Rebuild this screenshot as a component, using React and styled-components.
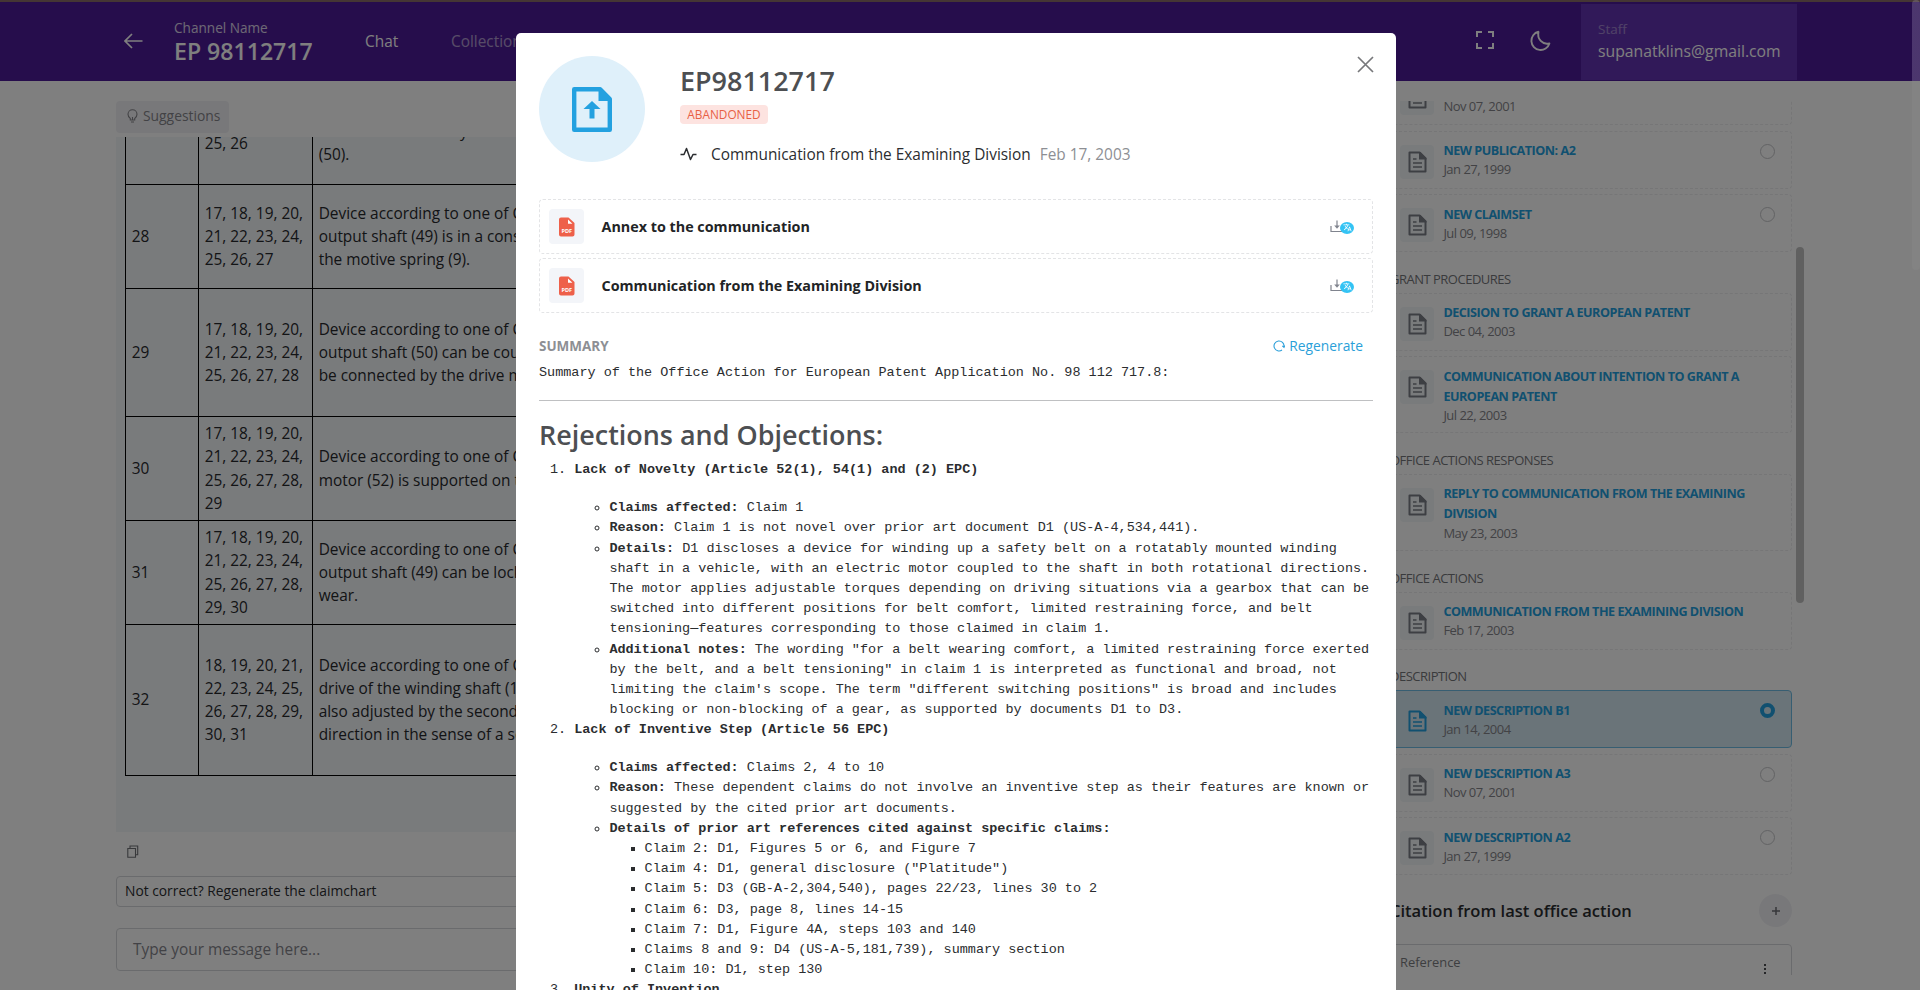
import React from "react";
import styled, { createGlobalStyle } from "styled-components";
import { MdTranslate } from "react-icons/md";

const Global = createGlobalStyle`
  * { box-sizing: border-box; }
  body { margin: 0; background: #fff; overflow: hidden; font-family: "Open Sans", "Noto Sans", sans-serif; color: #2b2d2f; }
  h1, h2, h3, p { margin: 0; }
  svg { display: block; }
`;

const BLUE = "#23a1e0";

const Page = styled.div`
  width: 1920px;
  height: 990px;
  overflow: hidden;
  display: flex;
  flex-direction: column;
`;

const Header = styled.header`
  flex: none;
  height: 81px;
  display: flex;
  align-items: stretch;
  background: #4d1a98;
  border-top: 2px solid #8a6c68;
  padding: 0 123px 0 124px;
  color: #fff;
`;

const Back = styled.div`
  width: 50px;
  padding-top: 30px;
`;

const Channel = styled.div`
  width: 191px;
  padding-top: 16px;
`;

const ChannelLabel = styled.div`
  font-size: 13.6px;
  line-height: 20px;
  opacity: 0.8;
`;

const ChannelTitle = styled.h1`
  font-size: 23.1px;
  font-weight: 600;
  line-height: 26px;
`;

const NavItem = styled.div`
  width: 86px;
  padding-top: 28px;
  font-size: 15.4px;
  line-height: 24px;
  opacity: ${(p) => (p.$active ? 1 : 0.55)};
`;

const HeaderTools = styled.div`
  margin-left: auto;
  display: flex;
  gap: 34px;
  padding: 28px 30px 0 0;
`;

const UserBox = styled.div`
  width: 216px;
  margin: 2px 0 1px;
  padding: 15px 16px 0 17px;
  background: #6333b2;
  white-space: nowrap;
`;

const UserRole = styled.div`
  font-size: 13.5px;
  line-height: 20px;
  opacity: 0.4;
`;

const UserMail = styled.div`
  font-size: 15.75px;
  line-height: 25px;
`;

const Main = styled.main`
  flex: 1;
  min-height: 0;
  display: flex;
  padding: 20px 0 0 116px;
`;

const Chat = styled.section`
  width: 1244px;
  margin-right: 30px;
  display: flex;
  flex-direction: column;
`;

const Suggestions = styled.div`
  width: 113px;
  height: 32px;
  flex: none;
  display: flex;
  align-items: center;
  gap: 5px;
  padding: 0 0 3px 11px;
  border-radius: 4px;
  background: #f1f1f5;
  color: #85858a;
  font-size: 13.86px;
`;

const ChartPane = styled.div`
  margin-top: 4px;
  height: 695px;
  flex: none;
  overflow: hidden;
  display: flex;
  flex-direction: column;
  justify-content: flex-end;
  padding: 0 9px 56px;
  background: #f3f6f9;
`;

const ClaimTable = styled.table`
  width: 100%;
  border-collapse: collapse;
  table-layout: fixed;
  font-size: 15.4px;
  line-height: 23.1px;
  color: #27292c;
`;

const ClaimRow = styled.tr`
  height: ${(p) => p.$h}px;
`;

const Cell = styled.td`
  width: ${(p) => p.$w || "auto"};
  border: 1px solid #000;
  padding: 0 5.7px;
  white-space: pre-line;
`;

const CopyRow = styled.div`
  padding: 13px 0 0 11px;
  height: 44px;
`;

const RegenerateBox = styled.div`
  height: 31px;
  border: 1px solid #d5d7db;
  border-radius: 4px;
  padding-left: 8px;
  font-size: 13.8px;
  line-height: 28px;
  color: #2b2d30;
`;

const MessageBox = styled.div`
  margin-top: 21px;
  height: 43px;
  border: 1px solid #d5d7db;
  border-radius: 4px;
  padding-left: 16px;
  font-size: 15.4px;
  line-height: 41px;
  color: #85858c;
`;

const Side = styled.aside`
  width: 402px;
  height: 874px;
  overflow: hidden;
`;

const SideInner = styled.div`
  margin-top: -34px;
`;

const SideItem = styled.div`
  display: flex;
  min-height: 58px;
  margin-bottom: 5.5px;
  padding: 9.5px 16px 8px 9px;
  border: 1px ${(p) => (p.$active ? "solid #6fbde4" : "dashed #ececee")};
  border-radius: 4px;
  background: ${(p) => (p.$active ? "#d5e8f2" : "transparent")};
`;

const SideIcon = styled.div`
  flex: none;
  width: 34px;
  height: 34px;
  margin: 3.5px 9.4px 0 0;
  padding-top: 6px;
  display: flex;
  justify-content: center;
  border-radius: 4px;
  background: ${(p) => (p.$active ? "transparent" : "#f3f6f9")};
  color: ${(p) => (p.$active ? BLUE : "#7b7f87")};
`;

const SideText = styled.div`
  flex: 1;
  white-space: pre;
`;

const SideTitle = styled.div`
  font-size: 12.6px;
  line-height: 20.1px;
  font-weight: 700;
  letter-spacing: -0.48px;
  color: ${BLUE};
`;

const SideDate = styled.div`
  font-size: 13px;
  line-height: 17.3px;
  letter-spacing: -0.52px;
  color: #85858a;
`;

const Radio = styled.div`
  flex: none;
  width: 15px;
  height: 15px;
  margin-top: 2.5px;
  border-radius: 50%;
  border: ${(p) => (p.$active ? `4px solid ${BLUE}` : "1px solid #c4c5c8")};
`;

const SideHeading = styled.h3`
  margin: 16.7px 0 4px;
  font-size: 13px;
  line-height: 20px;
  font-weight: 400;
  letter-spacing: -0.5px;
  color: #75767a;
`;

const CitationBar = styled.div`
  display: flex;
  justify-content: space-between;
  align-items: center;
  margin: 19px 0 17px;
`;

const CitationTitle = styled.h3`
  font-size: 16.55px;
  font-weight: 600;
  color: #2b2d30;
`;

const AddButton = styled.div`
  width: 33px;
  height: 33px;
  border-radius: 50%;
  display: flex;
  align-items: center;
  justify-content: center;
  background: #f1f1f5;
`;

const CitationCard = styled.div`
  height: 60px;
  display: flex;
  justify-content: space-between;
  border: 1px solid #d5d7db;
  border-radius: 4px;
  padding: 7px 24px 0 9px;
  font-size: 12.9px;
  line-height: 20px;
  color: #7b7c81;
`;

const MoreDots = styled.svg`
  margin-top: 12px;
`;

const SideScroll = styled.div`
  width: 8px;
  height: 356px;
  margin: 146px 0 0 4px;
  border-radius: 4px;
  background: #c1c1c1;
`;

const Backdrop = styled.div`
  position: fixed;
  inset: 0;
  padding-top: 33px;
  background: rgba(0, 0, 0, 0.5);
`;

const PageThumb = styled.div`
  position: absolute;
  top: 0;
  right: 0;
  width: 8px;
  height: 270px;
  border-radius: 4px;
  background: linear-gradient(rgba(190, 180, 210, 0.25) 81px, rgba(255, 255, 255, 0.03) 81px);
`;

const Modal = styled.div`
  width: 880px;
  height: 1100px;
  margin: 0 0 0 516px;
  padding: 23px 23px 0;
  border-radius: 5px;
  background: #fff;
`;

const ModalTop = styled.div`
  display: flex;
  height: 143px;
`;

const Avatar = styled.div`
  width: 106px;
  height: 106px;
  border-radius: 50%;
  display: flex;
  align-items: center;
  justify-content: center;
  background: #dff0fa;
`;

const Intro = styled.div`
  flex: 1;
  padding: 5px 0 0 35px;
`;

const PatentTitle = styled.h2`
  font-size: 26.95px;
  line-height: 40px;
  font-weight: 600;
  color: #4d4f52;
`;

const Badge = styled.span`
  display: block;
  width: 88px;
  height: 19px;
  margin-top: 4px;
  border-radius: 4px;
  text-align: center;
  font-size: 11.85px;
  line-height: 18px;
  color: #e85f45;
  background: #fde3e0;
`;

const Activity = styled.div`
  display: flex;
  align-items: center;
  margin-top: 18px;
  height: 24px;
  font-size: 15.4px;
  color: #2b2d30;
`;

const ActivityText = styled.span`
  margin: 0 9px 0 14px;
`;

const ActivityDate = styled.span`
  color: #8d8f94;
`;

const Close = styled.div`
  width: 16px;
`;

const DocRow = styled.div`
  display: flex;
  align-items: center;
  height: 55px;
  margin-bottom: 4px;
  padding: 0 18px 0 9px;
  border: 1px dashed #e3e4e6;
  border-radius: 4px;
  font-size: 14.33px;
  font-weight: 700;
  color: #222426;
`;

const DocIcon = styled.div`
  width: 35px;
  height: 35px;
  margin-right: 17.5px;
  border-radius: 4px;
  display: flex;
  align-items: center;
  justify-content: center;
  background: #f3f5f9;
`;

const DownloadWrap = styled.div`
  margin-left: auto;
  width: 24px;
  height: 14px;
  display: flex;
`;

const TranslateDot = styled.span`
  flex: none;
  width: 14px;
  height: 12px;
  margin: 2px 0 0 -6px;
  border-radius: 50%;
  display: flex;
  align-items: center;
  justify-content: center;
  color: #fff;
  background: #33c3f4;
`;

const SummaryBar = styled.div`
  display: flex;
  align-items: center;
  height: 24px;
  margin-top: 20.5px;
  padding-right: 10px;
`;

const SummaryLabel = styled.span`
  font-size: 13.475px;
  font-weight: 700;
  color: #8d8f94;
`;

const Regenerate = styled.span`
  margin-left: auto;
  display: flex;
  align-items: center;
  gap: 4px;
  font-size: 13.8px;
  color: #2b9fd9;
`;

const Summary = styled.div`
  font-family: "Liberation Mono", monospace;
  font-size: 13.475px;
  line-height: 20.21px;
  color: #2b2d2f;
  padding-top: 5.5px;
  hr { margin: 17.1px 0 15px; border: 0; height: 1px; background: #bfc0c2; }
  ol, ul { margin: 0; padding-left: 35.2px; }
`;

const SummaryHeading = styled.h2`
  font-family: "Open Sans", "Noto Sans", sans-serif;
  font-size: 26.95px;
  line-height: 38px;
  font-weight: 600;
  color: #4d4f52;
  margin-bottom: 6px;
`;

const PointList = styled.ul`
  list-style: circle;
`;

const Point = styled.div`
  height: 17.6px;
`;

const ClaimList = styled.ul`
  list-style: square;
`;

const DocGlyph = () => (
  <svg width="19" height="22" viewBox="0 0 19 22" fill="none">
    <path d="M1.5 1.5h10l6 6v13h-16z" stroke="currentColor" strokeWidth="2" strokeLinejoin="round" />
    <path d="M11 1h1.5l6 6v1.5H11z" fill="currentColor" />
    <path d="M5 8h3.5M5 12h9M5 16h9" stroke="currentColor" strokeWidth="1.7" />
  </svg>
);

const PdfGlyph = () => (
  <svg width="16" height="20" viewBox="0 0 16 20">
    <path d="M2 .5h7.5L15.5 6v11.5a2 2 0 0 1-2 2H2a2 2 0 0 1-2-2v-15a2 2 0 0 1 2-2z" fill="#ee604a" />
    <path d="M9 2.5v4.2h4.4z" fill="#fff" />
    <text x="7.8" y="15.6" fontSize="5.6" fontWeight="700" textAnchor="middle" fill="#fff" fontFamily="Open Sans, sans-serif">PDF</text>
  </svg>
);

const claims = [
  { no: "", h: 106, dep: "22, 23, 24,\n25, 26", text: "Device according to one\nof Claims 17 to 26 by the shaft\n(50)." },
  { no: "28", h: 104, dep: "17, 18, 19, 20,\n21, 22, 23, 24,\n25, 26, 27", text: "Device according to one of Claims 17 to 27, wherein the\noutput shaft (49) is in a constant connection with\nthe motive spring (9)." },
  { no: "29", h: 128, dep: "17, 18, 19, 20,\n21, 22, 23, 24,\n25, 26, 27, 28", text: "Device according to one of Claims 17 to 28, wherein the\noutput shaft (50) can be coupled and can\nbe connected by the drive motor." },
  { no: "30", h: 104, dep: "17, 18, 19, 20,\n21, 22, 23, 24,\n25, 26, 27, 28,\n29", text: "Device according to one of Claims 17 to 29, wherein the\nmotor (52) is supported on the frame." },
  { no: "31", h: 104, dep: "17, 18, 19, 20,\n21, 22, 23, 24,\n25, 26, 27, 28,\n29, 30", text: "Device according to one of Claims 17 to 30, wherein the\noutput shaft (49) can be locked during\nwear." },
  { no: "32", h: 151, dep: "18, 19, 20, 21,\n22, 23, 24, 25,\n26, 27, 28, 29,\n30, 31", text: "Device according to one of Claims 18 to 31, wherein the\ndrive of the winding shaft (13) is\nalso adjusted by the second motor in one\ndirection in the sense of a setting." },
];

const groups = [
  { items: [
    { t: "NEW PUBLICATION: A3", d: "Nov 07, 2001", radio: true },
    { t: "NEW PUBLICATION: A2", d: "Jan 27, 1999", radio: true },
    { t: "NEW CLAIMSET", d: "Jul 09, 1998", radio: true },
  ] },
  { name: "GRANT PROCEDURES", items: [
    { t: "DECISION TO GRANT A EUROPEAN PATENT", d: "Dec 04, 2003" },
    { t: "COMMUNICATION ABOUT INTENTION TO GRANT A\nEUROPEAN PATENT", d: "Jul 22, 2003" },
  ] },
  { name: "OFFICE ACTIONS RESPONSES", items: [
    { t: "REPLY TO COMMUNICATION FROM THE EXAMINING\nDIVISION", d: "May 23, 2003" },
  ] },
  { name: "OFFICE ACTIONS", items: [
    { t: "COMMUNICATION FROM THE EXAMINING DIVISION", d: "Feb 17, 2003" },
  ] },
  { name: "DESCRIPTION", items: [
    { t: "NEW DESCRIPTION B1", d: "Jan 14, 2004", radio: true, active: true },
    { t: "NEW DESCRIPTION A3", d: "Nov 07, 2001", radio: true },
    { t: "NEW DESCRIPTION A2", d: "Jan 27, 1999", radio: true },
  ] },
];

const priorArt = [
  "Claim 2: D1, Figures 5 or 6, and Figure 7",
  'Claim 4: D1, general disclosure ("Platitude")',
  "Claim 5: D3 (GB-A-2,304,540), pages 22/23, lines 30 to 2",
  "Claim 6: D3, page 8, lines 14-15",
  "Claim 7: D1, Figure 4A, steps 103 and 140",
  "Claims 8 and 9: D4 (US-A-5,181,739), summary section",
  "Claim 10: D1, step 130",
];

const DocumentRow = ({ name }) => (
  <DocRow>
    <DocIcon><PdfGlyph /></DocIcon>
    {name}
    <DownloadWrap>
      <svg width="16" height="14" viewBox="0 0 16 14" fill="none" stroke="#80848e">
        <path d="M1 6v5.5h13.5V6" strokeWidth="1.2" />
        <path d="M7 0.5v6" strokeWidth="1.2" />
        <path d="M4.2 5.5h5.6L7 8.8z" fill="#80848e" stroke="none" />
      </svg>
      <TranslateDot><MdTranslate size={9} /></TranslateDot>
    </DownloadWrap>
  </DocRow>
);

export default function App() {
  return (
    <>
      <Global />
      <Page>
        <Header>
          <Back>
            <svg width="19" height="18" viewBox="0 0 19 18" fill="none" stroke="#fff" strokeWidth="1.7">
              <path d="M18.5 9H1.5M8 2L1 9l7 7" />
            </svg>
          </Back>
          <Channel>
            <ChannelLabel>Channel Name</ChannelLabel>
            <ChannelTitle>EP 98112717</ChannelTitle>
          </Channel>
          <NavItem $active>Chat</NavItem>
          <NavItem>Collections</NavItem>
          <HeaderTools>
            <svg width="20" height="20" viewBox="0 0 20 20" fill="none" stroke="#fff" strokeWidth="2">
              <path d="M7 2H2v5M13 2h5v5M18 13v5h-5M7 18H2v-5" />
            </svg>
            <svg width="22" height="22" viewBox="0 0 22 22" fill="none" stroke="#fff" strokeWidth="1.9" strokeLinejoin="round">
              <path d="M9.5 1.8A9.2 9.2 0 1 0 20.4 13.4C13.5 15.2 7.8 9 9.5 1.8z" />
            </svg>
          </HeaderTools>
          <UserBox>
            <UserRole>Staff</UserRole>
            <UserMail>supanatklins@gmail.com</UserMail>
          </UserBox>
        </Header>
        <Main>
          <Chat>
            <Suggestions>
              <svg width="11" height="14" viewBox="0 0 11 14" fill="none" stroke="#85858a" strokeWidth="1.1">
                <path d="M3.3 9.5C1.6 8.3 1 7 1 5.3a4.5 4.5 0 0 1 9 0C10 7 9.4 8.3 7.7 9.5V11H3.3zM4 13h3M5.5 10.5V8" />
              </svg>
              Suggestions
            </Suggestions>
            <ChartPane>
              <ClaimTable>
                <tbody>
                  {claims.map((c, i) => (
                    <ClaimRow key={i} $h={c.h}>
                      <Cell $w="73px">{c.no}</Cell>
                      <Cell $w="114px">{c.dep}</Cell>
                      <Cell>{c.text}</Cell>
                    </ClaimRow>
                  ))}
                </tbody>
              </ClaimTable>
            </ChartPane>
            <CopyRow>
              <svg width="12" height="13" viewBox="0 0 12 13" fill="none" stroke="#707277" strokeWidth="1.1">
                <path d="M.8 3.5h7.7v8.7H.8zM3 3.3V1h7.7v8.7H8.7" />
              </svg>
            </CopyRow>
            <RegenerateBox>Not correct? Regenerate the claimchart</RegenerateBox>
            <MessageBox>Type your message here...</MessageBox>
          </Chat>
          <Side>
            <SideInner>
              {groups.map((g, gi) => (
                <React.Fragment key={gi}>
                  {g.name && <SideHeading>{g.name}</SideHeading>}
                  {g.items.map((it) => (
                    <SideItem key={it.t} $active={it.active}>
                      <SideIcon $active={it.active}><DocGlyph /></SideIcon>
                      <SideText>
                        <SideTitle>{it.t}</SideTitle>
                        <SideDate>{it.d}</SideDate>
                      </SideText>
                      {it.radio && <Radio $active={it.active} />}
                    </SideItem>
                  ))}
                </React.Fragment>
              ))}
              <CitationBar>
                <CitationTitle>Citation from last office action</CitationTitle>
                <AddButton>
                  <svg width="8" height="8" viewBox="0 0 8 8" stroke="#6d6e74" strokeWidth="1.5"><path d="M4 0v8M0 4h8" /></svg>
                </AddButton>
              </CitationBar>
              <CitationCard>
                Reference
                <MoreDots width="4" height="10" viewBox="0 0 4 10" fill="#4b4c50">
                  <rect x="1" y="0" width="2" height="2" /><rect x="1" y="4" width="2" height="2" /><rect x="1" y="8" width="2" height="2" />
                </MoreDots>
              </CitationCard>
            </SideInner>
          </Side>
          <SideScroll />
        </Main>
      </Page>
      <Backdrop>
        <PageThumb />
        <Modal>
          <ModalTop>
            <Avatar>
              <svg width="40" height="45" viewBox="0 0 40 45">
                <path d="M2.2 2.2h26L37.8 12v30.8H2.2z" fill="none" stroke={BLUE} strokeWidth="4.4" strokeLinejoin="round" />
                <path d="M26.5 1H29l10 9.8V14H26.5z" fill={BLUE} />
                <path d="M20 14l8.5 8H22.5v9.5h-5V22h-6z" fill={BLUE} />
              </svg>
            </Avatar>
            <Intro>
              <PatentTitle>EP98112717</PatentTitle>
              <Badge>ABANDONED</Badge>
              <Activity>
                <svg width="17" height="14" viewBox="0 0 17 14" fill="none" stroke="#2b2d30" strokeWidth="1.5" strokeLinejoin="round">
                  <path d="M.5 7.5H4l2.5-6 4 11 2.5-5h3.5" />
                </svg>
                <ActivityText>Communication from the Examining Division</ActivityText>
                <ActivityDate>Feb 17, 2003</ActivityDate>
              </Activity>
            </Intro>
            <Close>
              <svg width="17" height="17" viewBox="0 0 17 17" stroke="#77787b" strokeWidth="1.7"><path d="M1 1l15 15M16 1L1 16" /></svg>
            </Close>
          </ModalTop>
          <DocumentRow name="Annex to the communication" />
          <DocumentRow name="Communication from the Examining Division" />
          <SummaryBar>
            <SummaryLabel>SUMMARY</SummaryLabel>
            <Regenerate>
              <svg width="12" height="12" viewBox="0 0 12 12" fill="none" stroke="#2b9fd9" strokeWidth="1.1">
                <path d="M9 10A5 5 0 1 1 11 6.5M9.3 5.8L11 7.3l.8-1.8" />
              </svg>
              Regenerate
            </Regenerate>
          </SummaryBar>
          <Summary>
            <p>Summary of the Office Action for European Patent Application No. 98 112 717.8:</p>
            <hr />
            <SummaryHeading>Rejections and Objections:</SummaryHeading>
            <ol>
              <li>
                <b>Lack of Novelty (Article 52(1), 54(1) and (2) EPC)</b>
                <Point />
                <PointList>
                  <li><b>Claims affected:</b> Claim 1</li>
                  <li><b>Reason:</b> Claim 1 is not novel over prior art document D1 (US-A-4,534,441).</li>
                  <li><b>Details:</b> D1 discloses a device for winding up a safety belt on a rotatably mounted winding shaft in a vehicle, with an electric motor coupled to the shaft in both rotational directions. The motor applies adjustable torques depending on driving situations via a gearbox that can be switched into different positions for belt comfort, limited restraining force, and belt tensioning—features corresponding to those claimed in claim 1.</li>
                  <li><b>Additional notes:</b> The wording "for a belt wearing comfort, a limited restraining force exerted by the belt, and a belt tensioning" in claim 1 is interpreted as functional and broad, not limiting the claim's scope. The term "different switching positions" is broad and includes blocking or non-blocking of a gear, as supported by documents D1 to D3.</li>
                </PointList>
              </li>
              <li>
                <b>Lack of Inventive Step (Article 56 EPC)</b>
                <Point />
                <PointList>
                  <li><b>Claims affected:</b> Claims 2, 4 to 10</li>
                  <li><b>Reason:</b> These dependent claims do not involve an inventive step as their features are known or suggested by the cited prior art documents.</li>
                  <li>
                    <b>Details of prior art references cited against specific claims:</b>
                    <ClaimList>{priorArt.map((t) => <li key={t}>{t}</li>)}</ClaimList>
                  </li>
                </PointList>
              </li>
              <li><b>Unity of Invention</b></li>
            </ol>
          </Summary>
        </Modal>
      </Backdrop>
    </>
  );
}
